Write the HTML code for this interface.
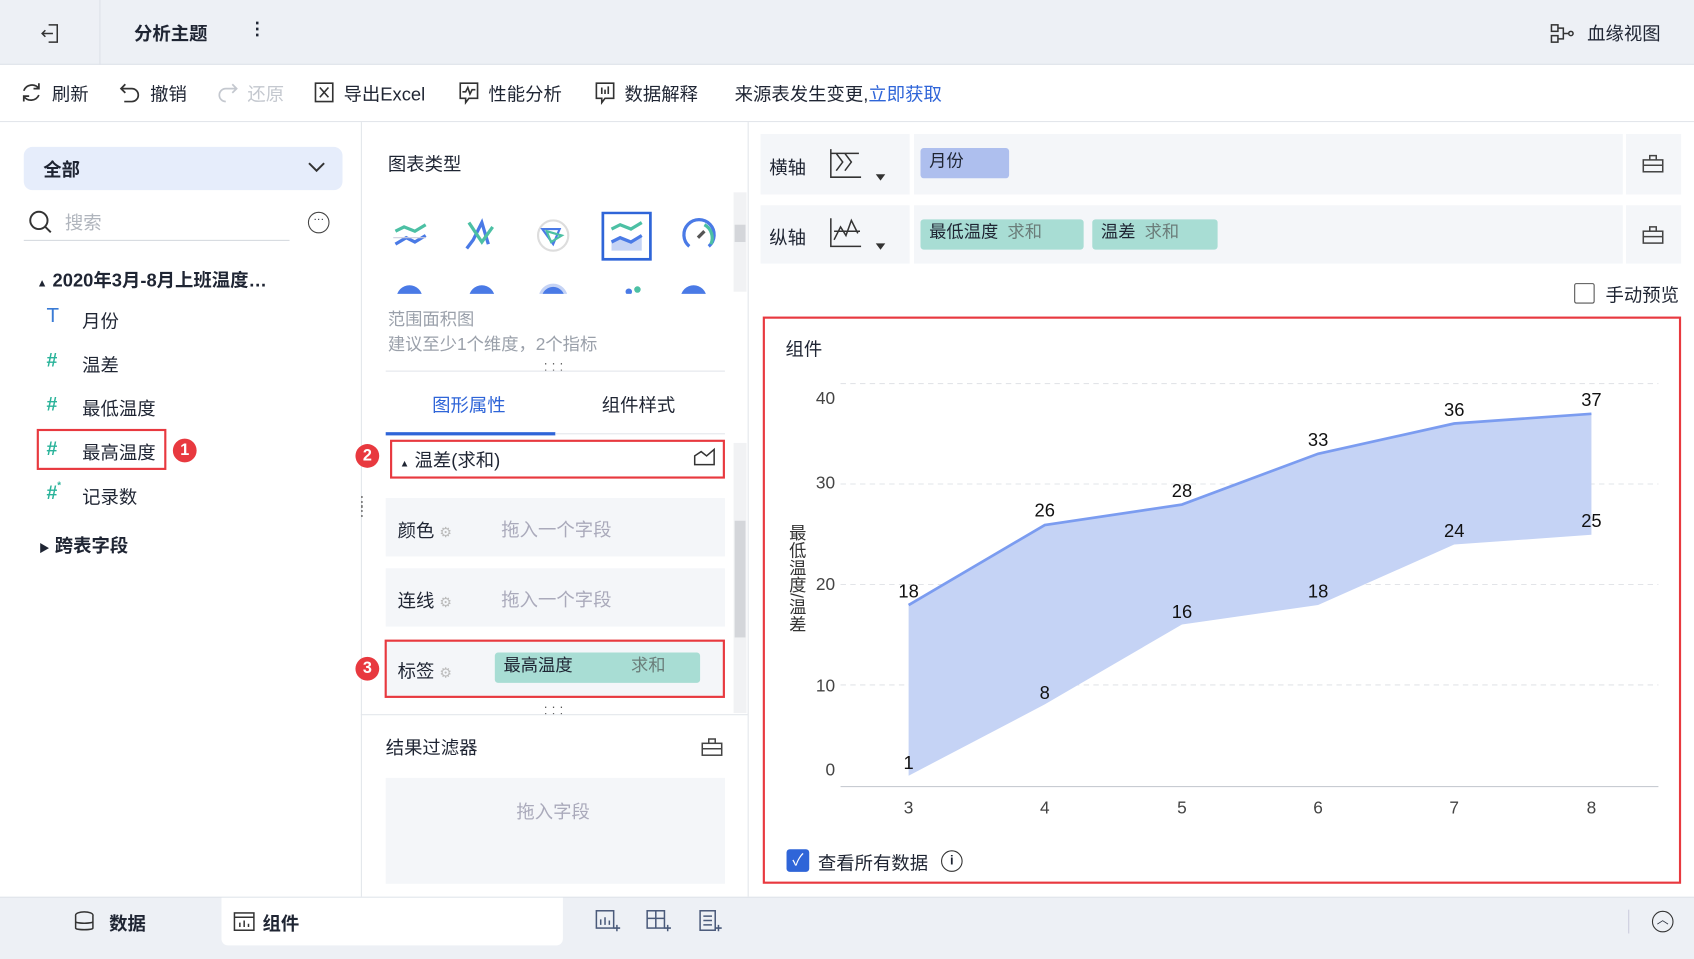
<!DOCTYPE html>
<html><head><meta charset="utf-8"><style>
*{box-sizing:border-box;margin:0;padding:0}
body{width:1694px;height:959px;overflow:hidden;background:#fff;font-family:"Liberation Sans","Noto Sans CJK SC",sans-serif;color:#1f2533}
#w{position:absolute;left:0;top:0;width:1568px;height:888px;transform:scale(1.0804);transform-origin:0 0;font-size:16px}
.a{position:absolute}
.t{position:absolute;white-space:nowrap;margin-top:-2px}
.g{color:#9aa0aa}
.box{position:absolute;background:#f4f6f9}
.red{position:absolute;border:2px solid #e8393f}
.num{position:absolute;width:22px;height:22px;border-radius:50%;background:#e8393f;color:#fff;font-size:15px;text-align:center;line-height:22px;font-weight:bold}
.pill{position:absolute;background:#a8ddd4;border-radius:3px;height:28px;line-height:26px;padding-left:8px;font-size:16px}
.h{position:absolute;color:#2ab39a;font-weight:bold;font-size:18px}
</style></head><body><div id="w">
<!-- top bar -->
<div class="a" style="left:0;top:0;width:1568px;height:60px;background:#edf0f5;border-bottom:1px solid #dfe3ea"></div>
<div class="a" style="left:92px;top:0;width:1px;height:60px;background:#dde1e8"></div>
<svg class="a" style="left:36px;top:20px" width="22" height="22" viewBox="0 0 22 22" fill="none" stroke="#333" stroke-width="1.4"><path d="M9 3h8v16H9M3 11h10M6 8l-3 3 3 3"/></svg>
<div class="t" style="left:124px;top:19px;font-weight:bold;font-size:17px">分析主题</div>
<div class="t" style="left:230px;top:19px;font-weight:bold">⋮</div>
<svg class="a" style="left:1434px;top:21px" width="24" height="20" fill="none" stroke="#333" stroke-width="1.4"><rect x="2" y="2" width="6" height="6"/><rect x="2" y="12" width="6" height="6"/><path d="M8 5h5v10H8M13 10h5"/><circle cx="20" cy="10" r="2"/></svg>
<div class="t" style="left:1469px;top:19px;font-size:17px">血缘视图</div>
<!-- toolbar -->
<div class="a" style="left:0;top:112px;width:1568px;height:1px;background:#e3e6eb"></div>
<svg class="a" style="left:19px;top:75px" width="21" height="21" fill="none" stroke="#333" stroke-width="1.6"><path d="M17 7a8 8 0 0 0-14 2M3 14a8 8 0 0 0 14-1M17 2v5h-5M3 19v-5h5"/></svg>
<div class="t" style="left:48px;top:75px;font-size:17px">刷新</div>
<svg class="a" style="left:110px;top:75px" width="21" height="21" fill="none" stroke="#333" stroke-width="1.6"><path d="M6 3L2 7l4 4M2 7h10a6 6 0 0 1 0 12H5"/></svg>
<div class="t" style="left:139px;top:75px;font-size:17px">撤销</div>
<svg class="a" style="left:200px;top:75px" width="21" height="21" fill="none" stroke="#c4c8cf" stroke-width="1.6"><path d="M15 3l4 4-4 4M19 7H9a6 6 0 0 0 0 12"/></svg>
<div class="t" style="left:229px;top:75px;font-size:17px;color:#c4c8cf">还原</div>
<svg class="a" style="left:290px;top:75px" width="20" height="21" fill="none" stroke="#333" stroke-width="1.5"><rect x="2" y="2" width="16" height="17"/><path d="M6 6l8 9M14 6l-8 9"/></svg>
<div class="t" style="left:318px;top:75px;font-size:17px">导出Excel</div>
<svg class="a" style="left:424px;top:75px" width="20" height="22" fill="none" stroke="#333" stroke-width="1.5"><path d="M2 2h16v14H10l-3 4v-4H2z"/><path d="M4 10h3l2-4 2 6 2-4h3"/></svg>
<div class="t" style="left:452px;top:75px;font-size:17px">性能分析</div>
<svg class="a" style="left:550px;top:75px" width="20" height="22" fill="none" stroke="#333" stroke-width="1.5"><path d="M2 2h16v14H10l-3 4v-4H2z"/><path d="M7 6v6M10 8v4M13 5v7"/></svg>
<div class="t" style="left:578px;top:75px;font-size:17px">数据解释</div>
<div class="t" style="left:680px;top:75px;font-size:17px">来源表发生变更,<span style="color:#2f65d8">立即获取</span></div>
<!-- left panel -->
<div class="a" style="left:334px;top:113px;width:1px;height:717px;background:#e3e6eb"></div>
<div class="a" style="left:22px;top:136px;width:295px;height:40px;background:#e6edfb;border-radius:8px"></div>
<div class="t" style="left:40px;top:145px;font-weight:bold;font-size:17px">全部</div>
<svg class="a" style="left:284px;top:148px" width="18" height="14" fill="none" stroke="#333" stroke-width="1.8"><path d="M2 3l7 7 7-7"/></svg>
<svg class="a" style="left:26px;top:194px" width="24" height="24" fill="none" stroke="#333" stroke-width="1.8"><circle cx="10" cy="10" r="8"/><path d="M16 16l5 5"/></svg>
<div class="t" style="left:60px;top:194px;font-size:17px;color:#b0b5bd">搜索</div>
<div class="a" style="left:22px;top:222px;width:246px;height:1px;background:#d5d9df"></div>
<div class="a" style="left:285px;top:196px;width:20px;height:20px;border:1.5px solid #444;border-radius:50%;font-size:10px;text-align:center;line-height:14px">···</div>
<div class="t" style="left:34px;top:247px;font-weight:bold;font-size:17px"><span style="font-size:10px">▲</span> 2020年3月-8月上班温度…</div>
<div class="t" style="left:43px;top:284px;font-size:19px;color:#3a7bd5">T</div>
<div class="t" style="left:76px;top:285px;font-size:17px">月份</div>
<div class="h" style="left:43px;top:323px">#</div><div class="t" style="left:76px;top:326px;font-size:17px">温差</div>
<div class="h" style="left:43px;top:364px">#</div><div class="t" style="left:76px;top:366px;font-size:17px">最低温度</div>
<div class="h" style="left:43px;top:405px">#</div><div class="t" style="left:76px;top:407px;font-size:17px">最高温度</div>
<div class="red" style="left:34px;top:397px;width:120px;height:38px"></div>
<div class="num" style="left:160px;top:406px">1</div>
<div class="h" style="left:43px;top:446px">#<span style="font-size:9px;position:absolute;top:-2px">*</span></div><div class="t" style="left:76px;top:448px;font-size:17px">记录数</div>
<div class="t" style="left:36px;top:493px;font-weight:bold;font-size:17px"><span style="font-size:10px">▶</span> 跨表字段</div>
<div class="t" style="left:328px;top:462px;color:#777;font-size:14px;line-height:8px">⋮<br>⋮</div>
<!-- middle -->
<div class="a" style="left:692px;top:113px;width:1px;height:717px;background:#e3e6eb"></div>
<div class="t" style="left:359px;top:140px;font-size:17px">图表类型</div>
<div class="a" style="left:679px;top:178px;width:12px;height:92px;background:#f1f2f4"></div>
<div class="a" style="left:680px;top:208px;width:10px;height:16px;background:#d4d6da"></div>
<svg class="a" style="left:360px;top:196px" width="310" height="80" fill="none" stroke-width="3">
<path d="M6 18l8-4 10 4 10-6" stroke="#4cc0a4"/><path d="M6 30l10-6 8 4 10-6" stroke="#4a7ae6"/><path d="M4 24h30" stroke="#ccd" stroke-width="1"/>
<path d="M72 34l6-8 8-16 6 20" stroke="#4a7ae6"/><path d="M74 10l12 18 10-14" stroke="#4cc0a4"/>
<circle cx="152" cy="22" r="14" stroke="#ddd" stroke-width="2"/><path d="M142 16l16 0-6 14z" stroke="#4a7ae6" stroke-width="2"/><path d="M146 18l14 4-10 6z" stroke="#4cc0a4" stroke-width="2"/>
<rect x="198" y="1" width="44" height="43" stroke="#2f65d8" stroke-width="2.5"/>
<path d="M206 28l8-4 10 4 10-6v14h-28z" fill="#c5d3f5" stroke="none"/><path d="M206 28l8-4 10 4 10-6" stroke="#4a7ae6"/><path d="M206 16l8-4 10 4 10-6" stroke="#4cc0a4"/>
<path d="M278 32a14 14 0 1 1 18 0" stroke="#4a7ae6"/><path d="M292 12a14 14 0 0 1 6 18" stroke="#4cc0a4"/><path d="M286 24l6-6" stroke="#555"/>
<circle cx="19" cy="80" r="12" fill="#4a7ae6" stroke="none"/><circle cx="86" cy="80" r="12" fill="#4a7ae6" stroke="none"/><circle cx="152" cy="80" r="12" fill="#4a7ae6" stroke="#c5d3f5"/><circle cx="222" cy="74" r="3" fill="#4a7ae6" stroke="none"/><circle cx="230" cy="72" r="3" fill="#4cc0a4" stroke="none"/><circle cx="282" cy="80" r="12" fill="#4a7ae6" stroke="none"/>
</svg>
<div class="a" style="left:340px;top:272px;width:350px;height:10px;background:#fff"></div>
<div class="t g" style="left:359px;top:287px;font-size:16px;line-height:23px">范围面积图<br>建议至少1个维度，2个指标</div>
<div class="t" style="left:503px;top:335px;font-size:12px;line-height:6px;color:#555">· · ·<br>· · ·</div>
<div class="a" style="left:357px;top:343px;width:314px;height:1px;background:#e3e6eb"></div>
<div class="t" style="left:400px;top:363px;font-size:17px;color:#2f65d8">图形属性</div>
<div class="t" style="left:557px;top:363px;font-size:17px">组件样式</div>
<div class="a" style="left:357px;top:400px;width:157px;height:3px;background:#2f65d8"></div>
<div class="a" style="left:514px;top:401px;width:157px;height:1px;background:#e3e6eb"></div>
<div class="a" style="left:679px;top:410px;width:12px;height:250px;background:#f1f2f4"></div>
<div class="a" style="left:680px;top:482px;width:10px;height:108px;background:#d4d6da"></div>
<div class="red" style="left:361px;top:407px;width:310px;height:36px"></div>
<div class="num" style="left:329px;top:411px">2</div>
<div class="t" style="left:370px;top:414px;font-size:17px"><span style="font-size:9px">▲</span> 温差(求和)</div>
<svg class="a" style="left:641px;top:414px" width="22" height="18" fill="none" stroke="#333" stroke-width="1.4"><path d="M2 16V8l6-4 5 4 7-6v14z"/></svg>
<div class="box" style="left:357px;top:461px;width:314px;height:54px"></div>
<div class="t" style="left:368px;top:479px;font-size:17px">颜色 <span style="color:#bbb;font-size:13px">⚙</span></div>
<div class="t" style="left:464px;top:478px;font-size:17px;color:#aab">拖入一个字段</div>
<div class="box" style="left:357px;top:526px;width:314px;height:54px"></div>
<div class="t" style="left:368px;top:544px;font-size:17px">连线 <span style="color:#bbb;font-size:13px">⚙</span></div>
<div class="t" style="left:464px;top:543px;font-size:17px;color:#aab">拖入一个字段</div>
<div class="box" style="left:357px;top:592px;width:314px;height:54px"></div>
<div class="red" style="left:356px;top:592px;width:315px;height:54px"></div>
<div class="num" style="left:329px;top:608px">3</div>
<div class="t" style="left:368px;top:609px;font-size:17px">标签 <span style="color:#bbb;font-size:13px">⚙</span></div>
<div class="pill" style="left:458px;top:604px;width:190px;height:28px">最高温度<span style="position:absolute;left:126px;color:#6b7d7a">求和</span></div>
<div class="t" style="left:503px;top:653px;font-size:12px;line-height:6px;color:#555">· · ·<br>· · ·</div>
<div class="a" style="left:334px;top:661px;width:358px;height:1px;background:#e3e6eb"></div>
<div class="t" style="left:357px;top:680px;font-size:17px">结果过滤器</div>
<svg class="a" style="left:649px;top:682px" width="20" height="18" fill="none" stroke="#444" stroke-width="1.4"><rect x="1" y="6" width="18" height="11"/><path d="M7 6V2h6v4M1 11h18"/></svg>
<div class="box" style="left:357px;top:720px;width:314px;height:98px"></div>
<div class="t" style="left:478px;top:739px;font-size:17px;color:#aab">拖入字段</div>
<!-- right -->
<div class="box" style="left:704px;top:124px;width:138px;height:56px"></div>
<div class="box" style="left:846px;top:124px;width:656px;height:56px"></div>
<div class="box" style="left:1505px;top:124px;width:51px;height:56px"></div>
<div class="box" style="left:704px;top:190px;width:138px;height:54px"></div>
<div class="box" style="left:846px;top:190px;width:656px;height:54px"></div>
<div class="box" style="left:1505px;top:190px;width:51px;height:54px"></div>
<div class="t" style="left:712px;top:143px;font-size:17px">横轴</div>
<div class="t" style="left:712px;top:208px;font-size:17px">纵轴</div>
<svg class="a" style="left:766px;top:136px" width="56" height="36" fill="none" stroke="#333" stroke-width="1.4"><path d="M3 2v26h28M8 6l6 8-6 8M16 6l6 8-6 8M3 6h26"/><path d="M46 26l3 4 3-4z" fill="#333"/></svg>
<svg class="a" style="left:766px;top:200px" width="56" height="36" fill="none" stroke="#333" stroke-width="1.4"><path d="M3 2v26h28M6 22l6-12 5 8 5-14 6 12M6 14h24"/><path d="M46 26l3 4 3-4z" fill="#333"/></svg>
<div class="pill" style="left:852px;top:137px;width:82px;background:#aebfee">月份</div>
<div class="pill" style="left:852px;top:203px;width:151px">最低温度 <span style="color:#6b7d7a;margin-left:4px">求和</span></div>
<div class="pill" style="left:1011px;top:203px;width:116px">温差 <span style="color:#6b7d7a;margin-left:4px">求和</span></div>
<svg class="a" style="left:1520px;top:142px" width="20" height="18" fill="none" stroke="#444" stroke-width="1.4"><rect x="1" y="6" width="18" height="11"/><path d="M7 6V2h6v4M1 11h18"/></svg>
<svg class="a" style="left:1520px;top:208px" width="20" height="18" fill="none" stroke="#444" stroke-width="1.4"><rect x="1" y="6" width="18" height="11"/><path d="M7 6V2h6v4M1 11h18"/></svg>
<div class="a" style="left:1457px;top:262px;width:19px;height:19px;border:1.5px solid #555;border-radius:2px"></div>
<div class="t" style="left:1486px;top:261px;font-size:17px">手动预览</div>
<div class="red" style="left:706px;top:293px;width:850px;height:525px"></div>
<div class="t" style="left:727px;top:311px;font-size:17px">组件</div>
<svg class="a" style="left:706px;top:293px" width="850" height="525" font-family="Liberation Sans, Noto Sans CJK SC, sans-serif" font-size="17">
<g transform="translate(-706,-293)">
<g stroke="#e2e4e8" stroke-dasharray="5,4"><path d="M778 355H1535M778 448H1535M778 541H1535M778 634H1535"/></g>
<path d="M778 728H1535" stroke="#c8ccd2"/>
<g fill="#444" text-anchor="end" font-size="16"><text x="773" y="374">40</text><text x="773" y="452">30</text><text x="773" y="546">20</text><text x="773" y="640">10</text><text x="773" y="718">0</text></g>
<g fill="#444" text-anchor="middle" font-size="16"><text x="841" y="753">3</text><text x="967" y="753">4</text><text x="1094" y="753">5</text><text x="1220" y="753">6</text><text x="1346" y="753">7</text><text x="1473" y="753">8</text></g>
<path d="M841 560L967 486L1094 467L1220 420L1346 392L1473 383L1473 495L1346 504L1220 560L1094 578L967 652L841 718Z" fill="#c5d3f5"/>
<path d="M841 560L967 486L1094 467L1220 420L1346 392L1473 383" fill="none" stroke="#7b9cf0" stroke-width="2.5"/>
<g fill="#111" text-anchor="middle"><text x="841" y="553">18</text><text x="967" y="478">26</text><text x="1094" y="460">28</text><text x="1220" y="413">33</text><text x="1346" y="385">36</text><text x="1473" y="376">37</text>
<text x="841" y="712">1</text><text x="967" y="647">8</text><text x="1094" y="572">16</text><text x="1220" y="553">18</text><text x="1346" y="497">24</text><text x="1473" y="488">25</text></g>
<text x="737" y="485" fill="#333" font-size="16" style="writing-mode:tb">最低温度/温差</text>
</g></svg>
<div class="a" style="left:728px;top:786px;width:21px;height:21px;background:#2f65d8;border-radius:3px;color:#fff;font-size:15px;text-align:center;line-height:21px">✓</div>
<div class="t" style="left:757px;top:787px;font-size:17px">查看所有数据</div>
<div class="a" style="left:871px;top:787px;width:20px;height:20px;border:1.5px solid #333;border-radius:50%;font-size:12px;text-align:center;line-height:17px;font-weight:bold">i</div>
<!-- bottom -->
<div class="a" style="left:0;top:830px;width:1568px;height:58px;background:#edf0f5;border-top:1px solid #dfe3ea"></div>
<div class="a" style="left:205px;top:831px;width:316px;height:44px;background:#fff;border-radius:0 0 6px 6px"></div>
<svg class="a" style="left:68px;top:843px" width="20" height="20" fill="#edf0f5" stroke="#333" stroke-width="1.4"><ellipse cx="10" cy="4" rx="8" ry="3"/><path d="M2 4v12c0 2 16 2 16 0V4M2 10c0 2 16 2 16 0"/></svg>
<div class="t" style="left:101px;top:843px;font-weight:bold;font-size:17px">数据</div>
<svg class="a" style="left:216px;top:844px" width="20" height="18" fill="none" stroke="#333" stroke-width="1.4"><rect x="1" y="1" width="18" height="16"/><path d="M1 5h18M6 14V10M10 14V8M14 14V11"/></svg>
<div class="t" style="left:243px;top:843px;font-weight:bold;font-size:17px">组件</div>
<svg class="a" style="left:550px;top:841px" width="125" height="24" fill="none" stroke="#4a5a7a" stroke-width="1.4"><rect x="2" y="2" width="16" height="16"/><path d="M6 15v-5M10 15v-7M14 15v-4M18 18h6M21 15v6"/><rect x="49" y="2" width="16" height="16"/><path d="M49 9h16M57 2v16M65 18h6M68 15v6"/><rect x="98" y="2" width="14" height="18"/><path d="M101 7h8M101 11h8M101 15h8M112 18h6M115 15v6"/></svg>
<div class="a" style="left:1507px;top:842px;width:1px;height:22px;background:#ccd"></div>
<div class="a" style="left:1529px;top:843px;width:20px;height:20px;border:1.5px solid #333;border-radius:50%;font-size:11px;text-align:center;line-height:16px">︿</div>
</div></body></html>
